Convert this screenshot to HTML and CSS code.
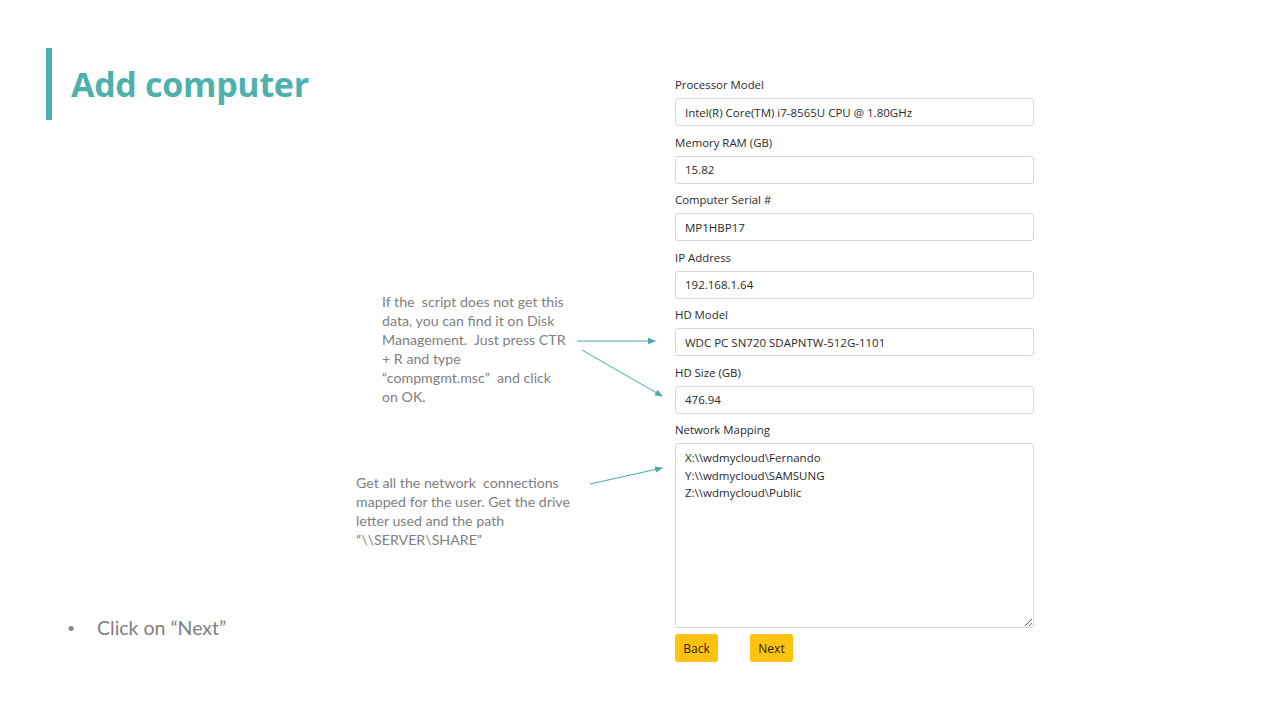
FILE: index.html
```html
<!DOCTYPE html>
<html lang="en">
<head>
<meta charset="utf-8">
<title>Add computer</title>
<link rel="stylesheet" href="styles.css">
</head>
<body>
<div class="slide">
  <div class="left">
    <h1 class="title">Add computer</h1>
    <ul class="bullets">
      <li>Click on “Next”</li>
    </ul>
  </div>
  <div class="notes">
    <p class="note note-disk">If the&nbsp; script does not get this<br>data, you can find it on Disk<br>Management.&nbsp; Just press CTR<br>+ R and type<br>“compmgmt.msc”&nbsp; and click<br>on OK.</p>
    <p class="note note-net">Get all the network&nbsp; connections<br>mapped for the user. Get the drive<br>letter used and the path<br>“\\SERVER\SHARE”</p>
  </div>
  <form class="form">
    <label class="field"><span class="label">Processor Model</span><input class="input" value="Intel(R) Core(TM) i7-8565U CPU @ 1.80GHz"></label>
    <label class="field"><span class="label">Memory RAM (GB)</span><input class="input" value="15.82"></label>
    <label class="field"><span class="label">Computer Serial #</span><input class="input" value="MP1HBP17"></label>
    <label class="field"><span class="label">IP Address</span><input class="input" value="192.168.1.64"></label>
    <label class="field"><span class="label">HD Model</span><input class="input" value="WDC PC SN720 SDAPNTW-512G-1101"></label>
    <label class="field"><span class="label">HD Size (GB)</span><input class="input" value="476.94"></label>
    <label class="field"><span class="label">Network Mapping</span><textarea class="textarea">X:\\wdmycloud\Fernando
Y:\\wdmycloud\SAMSUNG
Z:\\wdmycloud\Public</textarea></label>
    <div class="buttons">
      <button type="button" class="btn">Back</button>
      <button type="button" class="btn">Next</button>
    </div>
  </form>
  <svg class="arrows" width="1280" height="720" viewBox="0 0 1280 720">
    <defs>
      <marker id="ah" markerWidth="8" markerHeight="8" refX="7" refY="4" orient="auto" markerUnits="userSpaceOnUse">
        <path d="M0,0.8 L8,4 L0,7.2 Z" fill="#4aa9a5"/>
      </marker>
    </defs>
    <line x1="577" y1="341" x2="655" y2="341" stroke="#4aa9a5" stroke-width="1" marker-end="url(#ah)"/>
    <line x1="582" y1="350" x2="662" y2="396" stroke="#4aa9a5" stroke-width="1" marker-end="url(#ah)"/>
    <line x1="590" y1="484" x2="662" y2="468" stroke="#4aa9a5" stroke-width="1" marker-end="url(#ah)"/>
  </svg>
</div>
</body>
</html>
```
FILE: styles.css
```css
* { box-sizing: border-box; }
html, body { margin: 0; padding: 0; background: #fff; }
.slide {
  position: relative;
  width: 1280px;
  height: 720px;
  overflow: hidden;
  display: flex;
  padding-left: 46px;
  font-family: "Lato", "Liberation Sans", sans-serif;
}
.left {
  width: 310px;
  display: flex;
  flex-direction: column;
}
.title {
  margin: 48px 0 0 0;
  height: 72px;
  border-left: 6px solid #4db1ad;
  padding-left: 19px;
  font-family: "Open Sans", "Noto Sans", sans-serif;
  font-weight: 700;
  font-size: 34px;
  line-height: 72px;
  color: #4db1ad;
  letter-spacing: -0.3px;
}
.bullets {
  margin: 496px 0 0 0;
  padding: 0 0 0 51px;
  list-style: none;
}
.bullets li {
  position: relative;
  font-size: 19.5px;
  line-height: 24px;
  color: #7f7f7f;
}
.bullets li::before {
  content: "•";
  position: absolute;
  left: -30px;
  top: 0;
  font-size: 14px;
  color: #8a8a8a;
}
.notes {
  width: 319px;
  display: flex;
  flex-direction: column;
}
.note {
  margin: 0;
  font-size: 14.2px;
  line-height: 19px;
  color: #7f7f7f;
  white-space: nowrap;
}
.note-disk { margin-top: 292px; padding-left: 26px; }
.note-net { margin-top: 67px; }
.form {
  width: 359px;
  display: flex;
  flex-direction: column;
  padding-top: 75px;
  font-family: "Open Sans", "Noto Sans", sans-serif;
}
.field {
  display: flex;
  flex-direction: column;
  margin-bottom: 6.5px;
}
.label {
  height: 20px;
  line-height: 20px;
  font-size: 11.4px;
  color: #2a2a2a;
  margin-bottom: 3px;
}
.input, .textarea {
  width: 359px;
  border: 1px solid #d6d9dc;
  border-radius: 3px;
  background: #fff;
  font-family: "Open Sans", "Noto Sans", sans-serif;
  font-size: 11.5px;
  color: #2a2a2a;
  padding: 0 9px;
  margin: 0;
  outline: none;
}
.input { height: 28px; }
.textarea {
  height: 185px;
  padding-top: 5px;
  line-height: 17.5px;
  resize: vertical;
}
.field:last-of-type { margin-bottom: 6px; }
.buttons {
  display: flex;
  gap: 32px;
}
.btn {
  width: 43px;
  height: 28px;
  border: none;
  border-radius: 3px;
  background: #ffc20e;
  font-family: "Open Sans", "Noto Sans", sans-serif;
  font-size: 12px;
  color: #222;
  padding: 0;
}
.arrows {
  position: absolute;
  left: 0;
  top: 0;
  pointer-events: none;
}
```
